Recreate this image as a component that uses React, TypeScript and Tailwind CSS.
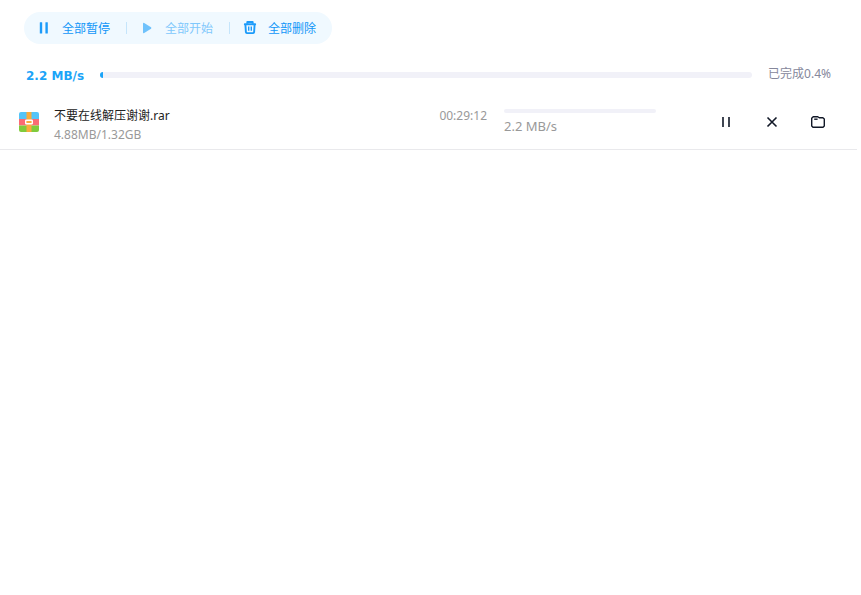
import React, { useState } from 'react'

type Task = {
  id: string;
  name: string;
  size: string;
  timeLeft: string;
  speed: string;
  percent: number;
};

const initialTasks: Task[] = [
  { id: "1", name: "不要在线解压谢谢.rar", size: "4.88MB/1.32GB", timeLeft: "00:29:12", speed: "2.2 MB/s", percent: 0 }
];

function PauseAllIcon() {
  return (
    <svg width="16" height="16" viewBox="0 0 16 16" fill="#1c9bfa" aria-hidden="true">
      <rect x="3.8" y="2.2" width="2.4" height="11.4" rx="0.4" />
      <rect x="9.4" y="2.2" width="2.4" height="11.4" rx="0.4" />
    </svg>
  )
}

function PlayIcon() {
  return (
    <svg width="16" height="16" viewBox="0 0 16 16" fill="#6fc2fc" aria-hidden="true">
      <path d="M4 3.8Q4 2.4 5.2 3L12 7.2Q12.9 8 12 8.8L5.2 13Q4 13.6 4 12.2Z" />
    </svg>
  )
}

function TrashIcon() {
  return (
    <svg width="16" height="16" viewBox="0 0 16 16" fill="none" stroke="#1c9bfa" strokeWidth="1.9" strokeLinejoin="round" aria-hidden="true">
      <path d="M2.8 4.2H13.2" strokeLinecap="round" />
      <path d="M5.3 3.8V2H10.7V3.8" />
      <path d="M3.4 4.5L3.9 12.2Q4 13.1 4.9 13.1H11.1Q12 13.1 12.1 12.2L12.6 4.5" />
      <path d="M6.7 6.6V10.8M9.3 6.6V10.8" strokeWidth="1.4" />
    </svg>
  )
}

function PauseIcon() {
  return (
    <svg width="16" height="16" viewBox="0 0 16 16" stroke="#111827" strokeWidth="1.6" aria-hidden="true">
      <path d="M5 3V13M11 3V13" />
    </svg>
  )
}

function CloseIcon() {
  return (
    <svg width="16" height="16" viewBox="0 0 16 16" stroke="#111827" strokeWidth="1.6" aria-hidden="true">
      <path d="M3.5 3.5L12.5 12.5M12.5 3.5L3.5 12.5" />
    </svg>
  )
}

function FolderIcon() {
  return (
    <svg width="16" height="16" viewBox="0 0 16 16" fill="none" stroke="#111827" strokeWidth="1.4" strokeLinejoin="round" aria-hidden="true">
      <path d="M3.2 2.7H7.8L9.2 3.7H12.9L14.3 5V12L13 13.3H3L1.7 12V4.2Z" />
      <path d="M4.2 5.2H7.6" />
    </svg>
  )
}

function ArchiveIcon() {
  return (
    <svg width="20" height="20" viewBox="0 0 20 20" className="shrink-0" aria-hidden="true">
      <path d="M0 7V2Q0 0 2 0H18Q20 0 20 2V7Z" fill="#54c4f8" />
      <rect y="7" width="20" height="6.5" fill="#fb6b74" />
      <path d="M0 13.5V18Q0 20 2 20H18Q20 20 20 18V13.5Z" fill="#80cb3c" />
      <rect x="7.5" width="5" height="20" fill="#f9ac3d" />
      <rect x="6.7" y="8.2" width="6.6" height="3.6" rx="0.6" fill="#f9ac3d" stroke="#fff" strokeWidth="1.4" />
    </svg>
  )
}

function App() {

  const [tasks, setTasks] = useState<Task[]>(initialTasks);

  const removeTask = (id: string) => {
    setTasks(tasks.filter((task) => task.id !== id));
  }

  return (
    <main className="min-h-screen bg-white pt-3 text-xs font-['Noto_Sans','Noto_Sans_CJK_SC',sans-serif]">
      <div className="ml-6 flex h-8 w-fit items-center rounded-full bg-[#f0f9ff] px-3 text-[#1196f8]">
        <button className="flex items-center gap-2.5 cursor-pointer">
          <PauseAllIcon />
          <span className="pt-0.5">全部暂停</span>
        </button>
        <span className="mx-4 h-3 w-px bg-[#c5e5fb]" />
        <button className="-ml-1 flex items-center gap-2.5 text-[#80c8fc]" disabled>
          <PlayIcon />
          <span className="pt-0.5">全部开始</span>
        </button>
        <span className="mx-4 h-3 w-px bg-[#c5e5fb]" />
        <button className="-ml-1 mr-1 flex items-center gap-2.5 cursor-pointer" onClick={() => setTasks([])}>
          <TrashIcon />
          <span className="pt-0.5">全部删除</span>
        </button>
      </div>

      <div className="mt-5 flex h-5 items-center pl-[26px] pr-[30px]">
        <span className="w-[74px] shrink-0 pt-1 font-bold text-[#1ba4f8] font-['DejaVu_Sans',sans-serif]">2.2 MB/s</span>
        <div className="mt-0.5 h-1.5 flex-1 overflow-hidden rounded-full bg-[#f1f1f8]">
          <div className="h-full bg-[#1ba4f8]" style={{ width: "0.4%" }} />
        </div>
        <span className="ml-4 shrink-0 text-[#85879b]">已完成0.4%</span>
      </div>

      <ul className="mt-3 mr-1">
        {tasks.map((task) => (
          <li key={task.id} className="flex h-[54px] items-center border-b border-[#e9e9ec] pb-0.5 pl-[19px] pr-[31px]">
            <ArchiveIcon />
            <div className="ml-[15px] min-w-0 flex-1 pt-[7px] leading-[19px]">
              <p className="truncate text-[#222222]">{task.name}</p>
              <p className="text-[#999999]">{task.size}</p>
            </div>
            <span className="mb-3 text-[#999999]">{task.timeLeft}</span>
            <div className="ml-[17px] w-[152px]">
              <div className="h-1 overflow-hidden rounded-full bg-[#f1f1f8]">
                <div className="h-full bg-[#1ba4f8]" style={{ width: `${task.percent}%` }} />
              </div>
              <p className="mt-[5px] text-[13px] leading-4 text-[#999999]">{task.speed}</p>
            </div>
            <div className="ml-[62px] flex gap-[30px]">
              <button aria-label="暂停" className="cursor-pointer"><PauseIcon /></button>
              <button aria-label="删除" className="cursor-pointer" onClick={() => removeTask(task.id)}><CloseIcon /></button>
              <button aria-label="打开文件夹" className="cursor-pointer"><FolderIcon /></button>
            </div>
          </li>
        ))}
      </ul>
    </main>
  )
}

export default App
